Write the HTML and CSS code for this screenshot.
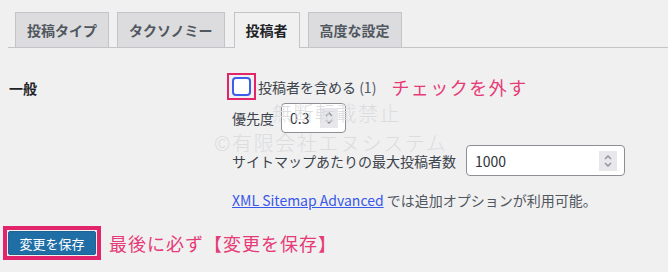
FILE: index.html
```html
<!DOCTYPE html>
<html lang="ja">
<head>
  <meta charset="UTF-8">
  <meta name="viewport" content="width=device-width, initial-scale=1.0">
  <title>投稿者 - サイトマップ設定</title>
  <link rel="stylesheet" href="styles.css">
</head>
<body>

  <!-- Tabs -->
  <nav class="tabs">
    <a class="tab">投稿タイプ</a>
    <a class="tab">タクソノミー</a>
    <a class="tab active">投稿者</a>
    <a class="tab">高度な設定</a>
  </nav>

  <!-- Settings -->
  <div class="settings">
    <div class="label">一般</div>
    <div class="fields">
      <div class="row">
        <span class="mark-box"><span class="checkbox"></span></span>
        <span class="check-text">投稿者を含める <span class="count">(1)</span></span>
        <span class="note note-check">チェックを外す</span>
      </div>
      <div class="row">
        <span>優先度</span>
        <div class="field field-small">
          <span>0.3</span>
          <span class="spin">
            <svg width="10" height="14" viewBox="0 0 10 14"><path d="M2 5 L5 2 L8 5 M2 9 L5 12 L8 9" fill="none" stroke="#8c8f94" stroke-width="1.3"/></svg>
          </span>
        </div>
      </div>
      <div class="row row-max">
        <span>サイトマップあたりの最大投稿者数</span>
        <div class="field field-wide">
          <span>1000</span>
          <span class="spin">
            <svg width="10" height="14" viewBox="0 0 10 14"><path d="M2 5 L5 2 L8 5 M2 9 L5 12 L8 9" fill="none" stroke="#8c8f94" stroke-width="1.3"/></svg>
          </span>
        </div>
      </div>
      <p class="hint"><a href="#">XML Sitemap Advanced</a> では追加オプションが利用可能。</p>
    </div>
  </div>

  <!-- Save -->
  <div class="save-row">
    <span class="mark-box mark-button"><button class="button-primary">変更を保存</button></span>
    <span class="note">最後に必ず【変更を保存】</span>
  </div>

  <!-- Watermark -->
  <div class="watermark">
    <div class="wm-1">無断転載禁止</div>
    <div class="wm-2">©有限会社エヌシステム</div>
  </div>

</body>
</html>
```

FILE: styles.css
```css
body {
  margin: 0;
  background: #f0f0f1;
  color: #3c434a;
  font-family: "Noto Sans CJK JP", "Noto Sans", sans-serif;
  font-size: 14px;
  position: relative;
  height: 272px;
  overflow: hidden;
}

/* Tabs */
.tabs {
  display: flex;
  margin: 12px 0 0 8px;
  padding-left: 7px;
  border-bottom: 1px solid #c3c4c7;
}

.tab {
  height: 34px;
  line-height: 34px;
  padding: 0 11px;
  margin-right: 8px;
  margin-bottom: -1px;
  background: #dcdcde;
  border: 1px solid #c3c4c7;
  border-bottom: none;
  color: #50575e;
  font-weight: 700;
  font-size: 14px;
}

.tab:nth-child(2) {
  margin-right: 9px;
}

.tab.active {
  background: #f0f0f1;
  color: #1d2327;
  height: 35px;
}

/* Settings table */
.settings {
  display: flex;
  padding: 25px 0 0 9px;
}

.label {
  width: 218px;
  padding-top: 5px;
  color: #1d2327;
  font-weight: 700;
}

.fields {
  display: flex;
  flex-direction: column;
  gap: 3px;
}

.row {
  display: flex;
  align-items: center;
  gap: 7px;
  padding-left: 5px;
}

.row:first-child {
  padding-left: 0;
  gap: 0;
}

.row-max {
  margin-top: 9px;
}

.mark-box {
  display: inline-flex;
  border: 2px solid #e2246a;
  padding: 2px 3px;
}

.checkbox {
  width: 15px;
  height: 15px;
  background: #fff;
  border: 2px solid #3d5ee8;
  border-radius: 4px;
}

.check-text {
  margin-left: 2px;
}

.count {
  color: #50575e;
}

.note {
  color: #e63b76;
  font-size: 18px;
  letter-spacing: 1px;
}

.note-check {
  margin-left: 15px;
  letter-spacing: 1.5px;
}

.field {
  display: flex;
  align-items: center;
  justify-content: space-between;
  height: 28px;
  padding: 0 7px 0 8px;
  background: #fff;
  border: 1px solid #8c8f94;
  border-radius: 4px;
  color: #2c3338;
  box-sizing: border-box;
}

.field-small {
  width: 65px;
  height: 30px;
}

.field-wide {
  width: 159px;
  height: 31px;
  margin-left: 3px;
}

.spin {
  display: flex;
  align-items: center;
  justify-content: center;
  width: 18px;
  height: 20px;
  background: #e7e7ec;
}

.hint {
  margin: 11px 0 0 5px;
  color: #50575e;
}

.hint a {
  color: #3858e9;
  text-decoration: underline;
}

/* Save button */
.save-row {
  display: flex;
  align-items: center;
  gap: 8px;
  margin: 16px 0 0 3px;
}

.mark-button {
  border-width: 4px;
  padding: 1px;
}

.button-primary {
  width: 88px;
  height: 24px;
  background: #1f6fa6;
  border: 1px solid #1c6492;
  border-radius: 2px;
  color: #fff;
  font-family: inherit;
  font-size: 13px;
  padding: 0;
}

/* Watermark overlay */
.watermark {
  position: absolute;
  left: 214px;
  top: 98px;
  color: #dcdcde;
  font-size: 20px;
  font-weight: 300;
  pointer-events: none;
}

.wm-1 {
  margin-left: 58px;
  letter-spacing: 1.5px;
}

.wm-2 {
  margin-top: 1px;
  letter-spacing: 1.6px;
}
```
